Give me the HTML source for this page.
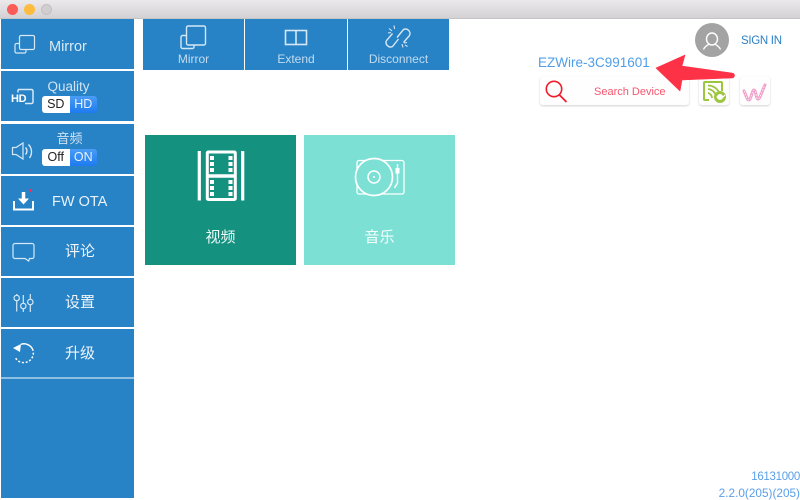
<!DOCTYPE html>
<html><head><meta charset="utf-8">
<style>
html,body{margin:0;padding:0;width:800px;height:498px;overflow:hidden;background:#fff;font-family:"Liberation Sans","Noto Sans CJK SC",sans-serif}
.a{position:absolute}
.t{position:absolute;white-space:nowrap;text-align:center}
.s{background:#2882c6;position:absolute;left:1px;width:133px}
svg{position:absolute;overflow:visible}
.seg{position:absolute;left:42px;width:55px;height:17px;border-radius:3px;overflow:hidden;font-size:12.500px;line-height:17px;text-align:center}
.seg b{font-weight:normal;position:absolute;top:0;height:17px}
.seg .l{left:0;width:27.500px;background:#fff;color:#222}
.seg .r{left:27.500px;width:27.500px;background:linear-gradient(#4a9cf5,#1d7bf0);color:#e6f1fd}
</style></head><body>
<div class="a" style="left:0;top:0;width:800px;height:18px;background:linear-gradient(#ebe9eb,#d3d1d3);border-bottom:1px solid #c4c4c4"></div>
<div class="a" style="left:6.500px;top:4px;width:11px;height:11px;border-radius:50%;background:#fc5b57"></div>
<div class="a" style="left:23.500px;top:4px;width:11px;height:11px;border-radius:50%;background:#fdbc40"></div>
<div class="a" style="left:40.500px;top:4px;width:11px;height:11px;border-radius:50%;background:#d0cecf;border:1px solid #c2c0c1;box-sizing:border-box"></div>

<div class="s" style="top:19px;height:50px"></div>
<div class="s" style="top:71px;height:50px"></div>
<div class="s" style="top:124px;height:50px"></div>
<div class="s" style="top:176px;height:49px"></div>
<div class="s" style="top:227px;height:49px"></div>
<div class="s" style="top:278px;height:49px"></div>
<div class="s" style="top:329px;height:48px"></div>
<div class="a" style="left:1px;top:377px;width:133px;height:2px;background:#8fbfe2"></div>
<div class="s" style="top:379px;height:119px"></div>

<svg style="left:0;top:0" width="134" height="400" fill="none" stroke="#d6e8f5" stroke-width="1.200">
<rect x="19.500" y="35.500" width="15" height="14" rx="1.500"/>
<path d="M19 43.500h-2.500a1.500 1.500 0 0 0-1.500 1.500v6.500a1.500 1.500 0 0 0 1.500 1.500h8a1.500 1.500 0 0 0 1.500-1.500v-2"/>
<path d="M18 89.500h13.500a1.500 1.500 0 0 1 1.500 1.500v11a1.500 1.500 0 0 1-1.500 1.500h-6.500M18 89.500v3" stroke-width="1.500"/>
<path d="M12.500 147.500h3.500l7-4.500v16l-7-4.500h-3.500z"/>
<path d="M25.500 147.500a5 5 0 0 1 0 7M28.500 144.500a10.500 10.500 0 0 1 1 13.500" stroke-width="1.400"/>
<path d="M14 201v8.500h19v-8.500" stroke="#fff" stroke-width="2"/>
<path d="M23.500 192v7" stroke="#fff" stroke-width="3.500"/>
<path d="M18 198.500h11l-5.500 6z" fill="#fff" stroke="none"/>
<path d="M15 243.500h17a2 2 0 0 1 2 2v11a2 2 0 0 1-2 2h-2.500l-.8 2.500-3.700-2.500h-10a2 2 0 0 1-2-2v-11a2 2 0 0 1 2-2z"/>
<path d="M16.700 294v1.500M16.700 301v10.500M23.300 295v8M23.300 309v3M30.300 294v5M30.300 305v7"/>
<circle cx="16.700" cy="298" r="2.700"/><circle cx="23.300" cy="306" r="2.700"/><circle cx="30.300" cy="302" r="2.700"/>
<path d="M21 344.300A9.500 9.500 0 0 1 32.500 349" stroke="#fff" stroke-width="1.500"/>
<path d="M32.500 349A9.500 9.500 0 1 1 15 357" stroke="#fff" stroke-width="1.500" stroke-dasharray="2 1.800"/>
<path d="M13 348l8-4-1 8z" fill="#fff" stroke="none"/>
</svg>
<div class="a" style="left:29px;top:189px;width:3px;height:3px;border-radius:50%;background:#f0305a"></div>
<div class="t" style="left:11px;top:92px;font-size:11px;line-height:14px;font-weight:bold;color:#fff;letter-spacing:-.3px">HD</div>

<div class="t" style="left:49px;top:38px;font-size:14.500px;line-height:18px;color:#d9eaf6">Mirror</div>
<div class="t" style="left:41px;top:79px;width:55px;font-size:13.500px;line-height:16px;color:#cfe3f3">Quality</div>
<div class="seg" style="top:96px"><b class="l">SD</b><b class="r">HD</b></div>
<div class="t" style="left:42px;top:131px;width:55px;font-size:13px;line-height:16px;color:#cfe3f3">音频</div>
<div class="seg" style="top:149px"><b class="l">Off</b><b class="r">ON</b></div>
<div class="t" style="left:52px;top:193px;font-size:14.500px;line-height:18px;color:#e8f2fa">FW OTA</div>
<div class="t" style="left:65px;top:243px;font-size:15px;line-height:18px;color:#eef5fb">评论</div>
<div class="t" style="left:65px;top:294px;font-size:15px;line-height:18px;color:#eef5fb">设置</div>
<div class="t" style="left:65px;top:345px;font-size:15px;line-height:18px;color:#eef5fb">升级</div>

<div class="a" style="left:143px;top:19px;width:101px;height:51px;background:#2882c6"></div>
<div class="a" style="left:245px;top:19px;width:102px;height:51px;background:#2882c6"></div>
<div class="a" style="left:348px;top:19px;width:101px;height:51px;background:#2882c6"></div>
<svg style="left:0;top:0" width="460" height="70" fill="none" stroke="#d4e7f5" stroke-width="1.400">
<rect x="186.500" y="26" width="19" height="19" rx="1.500"/>
<path d="M186 35.500h-3.500a1.500 1.500 0 0 0-1.500 1.500v10a1.500 1.500 0 0 0 1.500 1.500h10a1.500 1.500 0 0 0 1.500-1.500v-2"/>
<rect x="285.500" y="30.500" width="21" height="14" stroke-width="1.600"/><path d="M296 30v15" stroke-width="1.600"/>
<path d="M397 37.500L403.500 29.500A4.500 4.500 0 0 1 409.500 35.500L403.500 42.500"/>
<path d="M398.500 39L392.500 46.500A4.500 4.500 0 0 1 386.500 40.500L392.500 33.500"/>
<path d="M389 28.500l3 2.500M394 25.500l.6 3.500M388 33l3-.5M403 47.500l-1-3.500M407 42.500l-3 .5M407.500 46.500l-2.500-1.500" stroke-width="1.100"/>
</svg>
<div class="t" style="left:143px;top:52px;width:101px;font-size:12px;line-height:15px;color:#c2dcf0">Mirror</div>
<div class="t" style="left:245px;top:52px;width:102px;font-size:12px;line-height:15px;color:#c2dcf0">Extend</div>
<div class="t" style="left:348px;top:52px;width:101px;font-size:12px;line-height:15px;color:#c2dcf0">Disconnect</div>

<div class="a" style="left:145px;top:135px;width:151px;height:130px;background:#159180"></div>
<div class="a" style="left:304px;top:135px;width:151px;height:130px;background:#7de0d5"></div>
<svg style="left:0;top:0" width="460" height="200" fill="none" stroke="#fff">
<path d="M199.300 151v49.500M242.700 151v49.500" stroke-width="3.200"/>
<rect x="207.300" y="152" width="28" height="47.500" rx="1" stroke-width="3"/>
<path d="M207 176h29" stroke-width="3.500"/>
<path d="M210 156h4v4h-4zM210 162h4v4h-4zM210 168h4v4h-4zM228.500 156h4v4h-4zM228.500 162h4v4h-4zM228.500 168h4v4h-4zM210 180h4v4h-4zM210 186h4v4h-4zM210 192h4v4h-4zM228.500 180h4v4h-4zM228.500 186h4v4h-4zM228.500 192h4v4h-4z" fill="#fff" stroke="none"/>
<rect x="357" y="160.500" width="47" height="33.500" rx="2" stroke-width="1.300"/>
<circle cx="374" cy="177" r="18.500" fill="#7de0d5" stroke-width="1.700"/>
<circle cx="374" cy="177" r="6" stroke-width="1.500"/>
<circle cx="374" cy="177" r="1" fill="#fff" stroke="none"/>
<path d="M397.500 164v19l-3 5" stroke-width="1.400"/>
<rect x="395.500" y="168" width="4" height="5.500" fill="#fff" stroke="none"/>
</svg>
<div class="t" style="left:145px;top:228px;width:151px;font-size:15px;line-height:20px;color:#eafaf7">视频</div>
<div class="t" style="left:304px;top:228px;width:151px;font-size:15px;line-height:20px;color:#f5fdfc">音乐</div>

<div class="a" style="left:695px;top:23px;width:34px;height:34px;border-radius:50%;background:#a3a3a3"></div>
<svg style="left:0;top:0" width="800" height="120" fill="none">
<ellipse cx="712" cy="39" rx="5.500" ry="6" stroke="#fff" stroke-width="1.400"/>
<path d="M703.500 49.500c1-3 4-4.500 6-5.500M720.500 49.500c-1-3-4-4.500-6-5.500" stroke="#fff" stroke-width="1.400"/>
</svg>
<div class="t" style="left:741px;top:34px;font-size:11.500px;line-height:14px;color:#2c80c4;letter-spacing:-.3px">SIGN IN</div>
<div class="t" style="left:538px;top:54px;font-size:13.500px;line-height:17px;color:#4f9ee8">EZWire-3C991601</div>

<div class="a" style="left:540px;top:76px;width:149px;height:29px;border-radius:3px;background:#fefefe;box-shadow:0 1px 2px rgba(0,0,0,.18)"></div>
<div class="a" style="left:699px;top:76px;width:30px;height:29px;border-radius:3px;background:#fefefe;box-shadow:0 1px 2px rgba(0,0,0,.18)"></div>
<div class="a" style="left:740px;top:76px;width:30px;height:29px;border-radius:3px;background:#fefefe;box-shadow:0 1px 2px rgba(0,0,0,.18)"></div>
<svg style="left:0;top:0" width="800" height="120" fill="none">
<circle cx="554" cy="89" r="7.700" stroke="#f01c2c" stroke-width="1.600"/>
<path d="M559.500 95l7 7" stroke="#f01c2c" stroke-width="1.800"/>
<path d="M709 100h-4a1 1 0 0 1-1-1v-16a1 1 0 0 1 1-1h16a1 1 0 0 1 1 1v8" stroke="#9dc63f" stroke-width="2"/>
<path d="M708 93a5 5 0 0 1 4 5M708 89a9 9 0 0 1 8 7M708 85.500a12.500 12.500 0 0 1 11 6.500" stroke="#9dc63f" stroke-width="1.800"/>
<circle cx="720" cy="97" r="4.500" stroke="#9dc63f" stroke-width="3"/>
<path d="M716.500 97h6.500l2-2" stroke="#fff" stroke-width="1.200"/>
<path d="M744 91C746 95 747 100 749 100C751 100 752 90 754 90C756 90 756 99 758 99C760 99 762 91 765 85" stroke="#f2a0cb" stroke-width="3" stroke-linecap="round"/>
<path d="M744 91C746 95 747 100 749 100C751 100 752 90 754 90C756 90 756 99 758 99C760 99 762 91 765 85" stroke="#fff" stroke-width=".8" stroke-dasharray="1.500 1.500"/>
<path d="M656 68L685 55L682 66L732 73a2.500 2.500 0 0 1 0 5L682 80L680 91Z" fill="#fe3247" stroke="#fe3247" stroke-width=".6" stroke-linejoin="round"/>
</svg>
<div class="t" style="left:594px;top:85px;font-size:11px;line-height:14px;color:#f5566f">Search Device</div>

<div class="t" style="right:0;top:470px;font-size:11.500px;line-height:14px;color:#5a9fe8;letter-spacing:-.3px">16131000</div>
<div class="t" style="right:0;top:486px;font-size:11.800px;line-height:14px;color:#5a9fe8">2.2.0(205)(205)</div>
</body></html>
